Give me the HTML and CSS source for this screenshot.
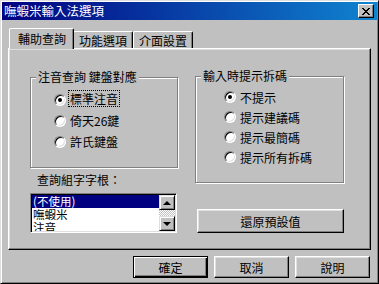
FILE: index.html
```html
<!DOCTYPE html>
<html lang="zh-Hant">
<head>
    <meta charset="UTF-8">
    <title>嘸蝦米輸入法選項</title>
    <link rel="stylesheet" href="styles.css">
</head>
<body>
    <div class="window">
        <div class="titlebar">
            <span class="title">嘸蝦米輸入法選項</span>
            <span class="close">
                <svg width="8" height="7" viewBox="0 0 8 7"><path d="M0 0h2v1h1v1h2V1h1V0h2v1H7v1H6v1H5v1h1v1h1v1h1v1H6V6H5V5H3v1H2v1H0V6h1V5h1V4h1V3H2V2H1V1H0z" fill="#000"/></svg>
            </span>
        </div>
        <div class="content">
            <div class="tabs">
                <div class="tab active">輔助查詢</div>
                <div class="tab">功能選項</div>
                <div class="tab">介面設置</div>
            </div>
            <div class="panel">
                <div class="col">
                    <fieldset class="group group-left">
                        <legend>注音查詢 鍵盤對應</legend>
                        <div class="radio"><span class="circle checked"></span><span class="focus">標準注音</span></div>
                        <div class="radio"><span class="circle"></span><span class="text">倚天26鍵</span></div>
                        <div class="radio"><span class="circle"></span><span class="text">許氏鍵盤</span></div>
                    </fieldset>
                    <div class="list-label">查詢組字字根：</div>
                    <div class="listbox">
                        <div class="items">
                            <div class="item selected">(不使用)</div>
                            <div class="item">嘸蝦米</div>
                            <div class="item">注音</div>
                        </div>
                        <div class="scrollbar">
                            <div class="arrow up"><span></span></div>
                            <div class="track"></div>
                            <div class="arrow down"><span></span></div>
                        </div>
                    </div>
                </div>
                <div class="col">
                    <fieldset class="group group-right">
                        <legend>輸入時提示拆碼</legend>
                        <div class="radio"><span class="circle checked"></span><span class="text">不提示</span></div>
                        <div class="radio"><span class="circle"></span><span class="text">提示建議碼</span></div>
                        <div class="radio"><span class="circle"></span><span class="text">提示最簡碼</span></div>
                        <div class="radio"><span class="circle"></span><span class="text">提示所有拆碼</span></div>
                    </fieldset>
                    <button class="btn reset">還原預設值</button>
                </div>
            </div>
            <div class="actions">
                <button class="btn default">確定</button>
                <button class="btn">取消</button>
                <button class="btn">說明</button>
            </div>
        </div>
    </div>
</body>
</html>
```

FILE: styles.css
```css
body {
    margin: 0;
    font-family: "Noto Sans CJK TC", "Liberation Sans", sans-serif;
    font-size: 12px;
    background-color: #c0c0c0;
}
.window {
    width: 379px;
    height: 284px;
    box-sizing: border-box;
    padding: 1px;
    background-color: #c0c0c0;
    border: 1px solid;
    border-color: #dfdfdf #000 #000 #dfdfdf;
    box-shadow: inset 1px 1px 0 #fff, inset -1px -1px 0 #808080;
}
.titlebar {
    height: 18px;
    display: flex;
    align-items: center;
    justify-content: space-between;
    padding: 0 3px 0 2px;
    background: linear-gradient(to right, #000080, #1084d0);
    color: #fff;
}
.title {
    line-height: 12px;
    font-size: 12.5px;
}
.close {
    width: 16px;
    height: 14px;
    box-sizing: border-box;
    display: flex;
    align-items: center;
    justify-content: center;
    background-color: #c0c0c0;
    border: 1px solid;
    border-color: #fff #000 #000 #fff;
    box-shadow: inset -1px -1px 0 #808080;
}
.content {
    padding: 0 6px;
}
.tabs {
    display: flex;
    align-items: flex-end;
    height: 28px;
    position: relative;
    z-index: 1;
}
.tab {
    height: 17px;
    box-sizing: border-box;
    padding: 2px 5px 0;
    line-height: 13px;
    background-color: #c0c0c0;
    border: 1px solid;
    border-color: #fff #000 transparent #fff;
    border-bottom: none;
    border-radius: 2px 2px 0 0;
    box-shadow: inset -1px 0 0 #808080;
}
.tab.active {
    height: 21px;
    margin: 0 -1px -1px 1px;
    padding: 3px 7px 0 8px;
    position: relative;
    z-index: 2;
}
.panel {
    height: 202px;
    box-sizing: border-box;
    padding: 22px 0 0 21px;
    border: 1px solid;
    border-color: #fff #000 #000 #fff;
    box-shadow: inset -1px -1px 0 #808080, inset 1px 1px 0 #dfdfdf;
    display: grid;
    grid-template-columns: 148px 149px;
    column-gap: 17px;
    align-items: start;
}
.group {
    margin: 0;
    min-width: 0;
    border: 1px solid #808080;
    box-shadow: inset 1px 1px 0 #fff, 1px 1px 0 #fff;
}
.group legend {
    margin-left: 5px;
    padding: 0 2px;
    line-height: 12px;
    background-color: #c0c0c0;
}
.group-left {
    padding: 6px 0 15px 0;
}
.group-left .radio {
    padding-left: 23px;
}
.group-right {
    margin-top: -1px;
    padding: 5px 0 15px 0;
}
.radio {
    display: flex;
    align-items: center;
    height: 21px;
    line-height: 13px;
}
.group-right .radio {
    height: 20px;
    padding-left: 28px;
}
.circle {
    width: 12px;
    height: 12px;
    box-sizing: border-box;
    border-radius: 50%;
    border: 1px solid;
    border-color: #808080 #fff #fff #808080;
    background-color: #fff;
    box-shadow: inset 1px 1px 0 #000, inset -1px -1px 0 #dfdfdf;
    display: flex;
    align-items: center;
    justify-content: center;
    margin-right: 3px;
}
.circle.checked::after {
    content: "";
    width: 4px;
    height: 4px;
    border-radius: 50%;
    background-color: #000;
}
.text {
    padding: 0 1px;
}
.focus {
    padding: 1px;
    border: 1px dotted #000;
    margin: -2px 0 0 -1px;
}
.list-label {
    margin: 6px 0 0 7px;
    line-height: 12px;
}
.listbox {
    margin-top: 7px;
    width: 147px;
    height: 40px;
    box-sizing: border-box;
    border: 1px solid;
    border-color: #808080 #fff #fff #808080;
    box-shadow: inset 1px 1px 0 #000, inset -1px -1px 0 #dfdfdf;
    padding: 1px;
    background-color: #fff;
    display: flex;
}
.items {
    flex: 1;
    overflow: hidden;
}
.item {
    height: 13px;
    line-height: 13px;
    font-size: 11.5px;
    padding-left: 1px;
    white-space: nowrap;
}
.item.selected {
    background-color: #000080;
    color: #fff;
}
.scrollbar {
    width: 16px;
    display: flex;
    flex-direction: column;
    background: repeating-conic-gradient(#c0c0c0 0 25%, #fff 0 50%) 0 0 / 2px 2px;
}
.arrow {
    height: 15px;
    box-sizing: border-box;
    background-color: #c0c0c0;
    border: 1px solid;
    border-color: #dfdfdf #000 #000 #dfdfdf;
    box-shadow: inset 1px 1px 0 #fff, inset -1px -1px 0 #808080;
    display: flex;
    align-items: center;
    justify-content: center;
}
.arrow span {
    width: 0;
    height: 0;
    border-left: 4px solid transparent;
    border-right: 4px solid transparent;
}
.arrow.up span {
    border-bottom: 4px solid #000;
}
.arrow.down span {
    border-top: 4px solid #000;
}
.track {
    flex: 1;
}
.btn {
    font-family: inherit;
    font-size: 12px;
    color: #000;
    background-color: #c0c0c0;
    border: 1px solid;
    border-color: #fff #000 #000 #fff;
    box-shadow: inset -1px -1px 0 #808080, inset 1px 1px 0 #dfdfdf;
    padding: 0;
}
.reset {
    margin: 26px 0 0 2px;
    width: 147px;
    height: 24px;
}
.actions {
    display: flex;
    justify-content: flex-end;
    gap: 6px;
    margin: 6px 1px 0 0;
}
.actions .btn {
    width: 75px;
    height: 22px;
}
.actions .default {
    border-color: #000;
    box-shadow: inset 1px 1px 0 #fff, inset -1px -1px 0 #000, inset -2px -2px 0 #808080;
}
```
